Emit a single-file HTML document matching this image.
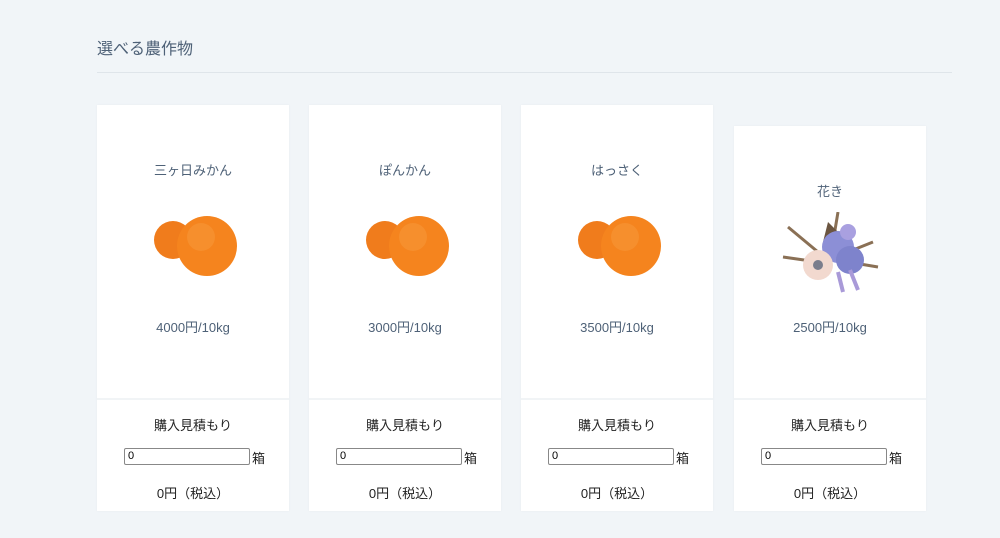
<!DOCTYPE html>
<html><head><meta charset="utf-8"><style>
body{margin:0;width:1000px;height:538px;background:#f1f5f8;font-family:"Liberation Sans","Noto Sans CJK JP",sans-serif;position:relative;overflow:hidden}
.t{position:absolute;left:97px;top:35px;font-size:16px;color:#4e6177}
.hr{position:absolute;left:97px;top:72px;width:855px;height:1px;background:#dfe5ea}
.c{position:absolute;width:192px;background:#fff;box-shadow:0 0 2px rgba(0,0,0,.04)}
.c>div{position:absolute;left:0;width:100%;text-align:center}
.n{font-size:13px;color:#4e6177}
.p{font-size:13px;color:#4e6177;top:212px}
.d{height:2px;background:#f1f4f6}
.e{font-size:13px;color:#222}
.in{position:absolute;left:27px;width:123px;height:15px;border:1px solid #888;border-radius:2px;font-size:11px;text-align:left;line-height:15px;padding-left:3px;box-sizing:border-box;width:126px;height:17px}
</style></head><body>
<div class="t">選べる農作物</div><div class="hr"></div>

<div class="c" style="left:97px;top:105px;height:406px">
<div class="n" style="top:55px">三ヶ日みかん</div>
<svg style="position:absolute;left:54px;top:110px" width="90" height="64"><circle cx="22" cy="25" r="19" fill="#f07c1c"/><circle cx="56" cy="31" r="30" fill="#f5841e"/><circle cx="50" cy="22" r="14" fill="#f79a3c" opacity=".5"/></svg>
<div class="p">4000円/10kg</div>
<div class="d" style="top:293px"></div>
<div class="e" style="top:310px">購入見積もり</div>
<div style="top:343px;height:17px"><span class="in">0</span><span class="e" style="position:absolute;left:155px;top:0">箱</span></div>
<div class="e" style="top:378px">0円（税込）</div>
</div>

<div class="c" style="left:309px;top:105px;height:406px">
<div class="n" style="top:55px">ぽんかん</div>
<svg style="position:absolute;left:54px;top:110px" width="90" height="64"><circle cx="22" cy="25" r="19" fill="#f07c1c"/><circle cx="56" cy="31" r="30" fill="#f5841e"/><circle cx="50" cy="22" r="14" fill="#f79a3c" opacity=".5"/></svg>
<div class="p">3000円/10kg</div>
<div class="d" style="top:293px"></div>
<div class="e" style="top:310px">購入見積もり</div>
<div style="top:343px;height:17px"><span class="in">0</span><span class="e" style="position:absolute;left:155px;top:0">箱</span></div>
<div class="e" style="top:378px">0円（税込）</div>
</div>

<div class="c" style="left:521px;top:105px;height:406px">
<div class="n" style="top:55px">はっさく</div>
<svg style="position:absolute;left:54px;top:110px" width="90" height="64"><circle cx="22" cy="25" r="19" fill="#f07c1c"/><circle cx="56" cy="31" r="30" fill="#f5841e"/><circle cx="50" cy="22" r="14" fill="#f79a3c" opacity=".5"/></svg>
<div class="p">3500円/10kg</div>
<div class="d" style="top:293px"></div>
<div class="e" style="top:310px">購入見積もり</div>
<div style="top:343px;height:17px"><span class="in">0</span><span class="e" style="position:absolute;left:155px;top:0">箱</span></div>
<div class="e" style="top:378px">0円（税込）</div>
</div>

<div class="c" style="left:734px;top:126px;height:385px">
<div class="n" style="top:55px">花き</div>
<svg style="position:absolute;left:44px;top:86px" width="110" height="86">
<path d="M10 15 L40 40 M5 45 L40 50 M60 0 L55 30 M100 55 L70 50 M95 30 L70 40" stroke="#8a7055" stroke-width="3"/>
<path d="M50 10 L65 25 L45 30Z" fill="#6b5540"/>
<circle cx="60" cy="35" r="16" fill="#8c8fd6"/><circle cx="72" cy="48" r="14" fill="#7e83cc"/><circle cx="70" cy="20" r="8" fill="#a9a0e0"/>
<circle cx="40" cy="53" r="15" fill="#f2d9cf"/><circle cx="40" cy="53" r="5" fill="#7a7d8c"/>
<path d="M60 60 L65 80 M72 58 L80 78" stroke="#a99ad8" stroke-width="4"/>
</svg>
<div class="p" style="top:191px">2500円/10kg</div>
<div class="d" style="top:272px"></div>
<div class="e" style="top:289px">購入見積もり</div>
<div style="top:322px;height:17px"><span class="in">0</span><span class="e" style="position:absolute;left:155px;top:0">箱</span></div>
<div class="e" style="top:357px">0円（税込）</div>
</div>
</body></html>
